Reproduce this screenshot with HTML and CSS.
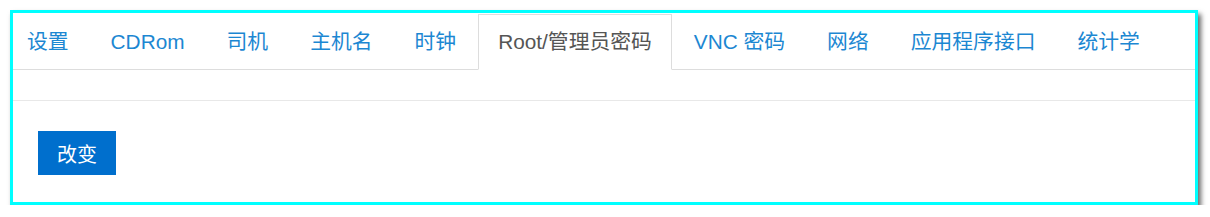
FILE: index.html
```html
<!DOCTYPE html>
<html lang="zh-CN">
<head>
    <meta charset="UTF-8">
    <title>Root/管理员密码</title>
    <link rel="stylesheet" href="styles.css">
</head>
<body>
    <div class="frame">
        <ul class="tabs">
            <li><a href="#">设置</a></li>
            <li><a href="#">CDRom</a></li>
            <li><a href="#">司机</a></li>
            <li><a href="#">主机名</a></li>
            <li><a href="#">时钟</a></li>
            <li class="active"><a href="#">Root/管理员密码</a></li>
            <li><a href="#">VNC 密码</a></li>
            <li><a href="#">网络</a></li>
            <li><a href="#">应用程序接口</a></li>
            <li><a href="#">统计学</a></li>
        </ul>
        <div class="tab-content">
            <div class="panel">
                <button type="button" class="btn-change">改变</button>
            </div>
        </div>
    </div>
</body>
</html>
```

FILE: styles.css
```css
body {
    margin: 0;
    padding: 10px 12px 0 10px;
    background-color: #ffffff;
    font-family: "Liberation Sans", "Noto Sans CJK SC", sans-serif;
    font-size: 20.8px;
}
.frame {
    height: 189px;
    border: 3px solid #00ffff; /* highlight */
    box-shadow: 3px 4px 5px rgba(0, 0, 0, 0.6);
    background-color: #ffffff;
}
.tabs {
    display: flex;
    list-style: none;
    margin: 0;
    padding: 1px 0 0 0;
    border-bottom: 1px solid #dddddd;
}
.tabs li {
    margin-right: 2px;
    margin-bottom: -1px;
}
.tabs a {
    display: block;
    padding: 0 19px;
    line-height: 54px;
    border: 1px solid transparent;
    color: #1c87d2;
    text-decoration: none;
}
.tabs li:first-child a {
    padding-left: 13px;
}
.tabs li.active a {
    color: #555555;
    border-color: #dddddd;
    border-bottom-color: #ffffff;
    background-color: #ffffff;
}
.tab-content {
    padding-top: 30px;
}
.panel {
    border-top: 1px solid #e8e8e8;
    padding: 30px 25px;
}
.btn-change {
    height: 44px;
    padding: 0 19px;
    border: none;
    background-color: #006fcd;
    color: #ffffff;
    font-family: "Liberation Sans", "Noto Sans CJK SC", sans-serif;
    font-size: 20px;
}
```
